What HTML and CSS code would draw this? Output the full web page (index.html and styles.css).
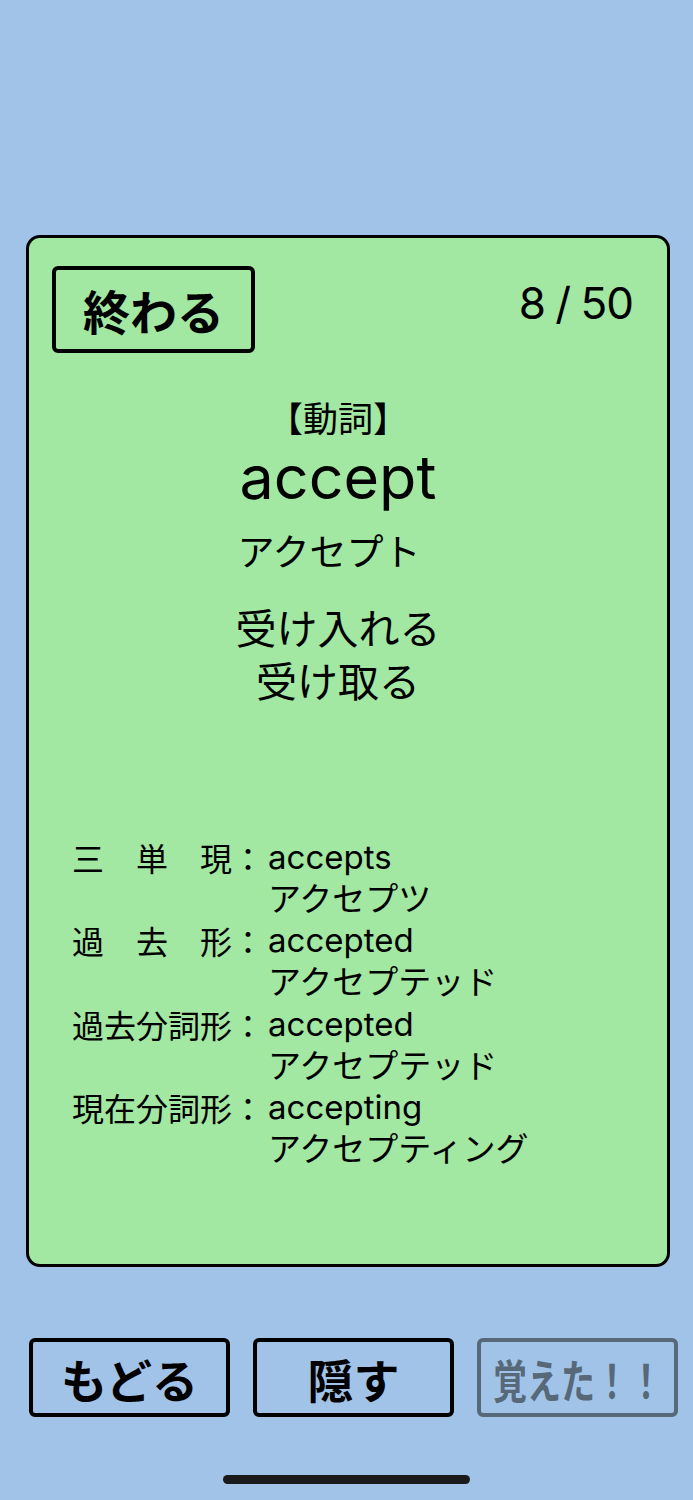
FILE: index.html
```
<!DOCTYPE html>
<html lang="ja">
<head>
<meta charset="utf-8">
<title>単語カード</title>
<link rel="stylesheet" href="styles.css">
</head>
<body>
<div class="screen">
  <section class="card">
    <div class="card-header">
      <button class="btn btn-finish">終わる</button>
      <div class="counter">8 / 50</div>
    </div>
    <div class="word-block">
      <div class="pos">【動詞】</div>
      <div class="word">accept</div>
      <div class="reading">アクセプト</div>
      <div class="meaning">
        <div>受け入れる</div>
        <div>受け取る</div>
      </div>
    </div>
    <div class="forms">
      <div class="form-label">三　単　現：</div>
      <div class="form-value"><span class="en">accepts</span><br>アクセプツ</div>
      <div class="form-label">過　去　形：</div>
      <div class="form-value"><span class="en">accepted</span><br>アクセプテッド</div>
      <div class="form-label">過去分詞形：</div>
      <div class="form-value"><span class="en">accepted</span><br>アクセプテッド</div>
      <div class="form-label">現在分詞形：</div>
      <div class="form-value"><span class="en">accepting</span><br>アクセプティング</div>
    </div>
  </section>
  <nav class="actions">
    <button class="btn btn-action">もどる</button>
    <button class="btn btn-action">隠す</button>
    <button class="btn btn-action btn-disabled"><span class="condensed">覚えた！！</span></button>
  </nav>
  <div class="home-indicator"></div>
</div>
</body>
</html>
```
FILE: styles.css
```
html, body {
  margin: 0;
  padding: 0;
}
body {
  background: #a0c3e7;
  font-family: "Inter", "Noto Sans CJK JP", sans-serif;
  color: #000;
}
.screen {
  width: 693px;
  height: 1500px;
  display: flex;
  flex-direction: column;
  box-sizing: border-box;
  padding-top: 235px;
}
.card {
  margin-left: 26px;
  width: 644px;
  height: 1032px;
  box-sizing: border-box;
  background: #a2e7a2;
  border: 3px solid #000;
  border-radius: 14px;
  display: flex;
  flex-direction: column;
}
.card-header {
  display: flex;
  justify-content: space-between;
  align-items: flex-start;
  padding: 28px 34px 0 23px;
}
.btn {
  font-family: "Noto Sans CJK JP", sans-serif;
  font-weight: 700;
  background: transparent;
  border: 4px solid #000;
  border-radius: 6px;
  color: #000;
  padding: 0;
  margin: 0;
  box-sizing: border-box;
  display: flex;
  align-items: center;
  justify-content: center;
}
.btn-finish {
  width: 203px;
  height: 87px;
  font-size: 47px;
  line-height: 1;
}
.counter {
  font-size: 44px;
  line-height: 1;
  margin-top: 15px;
  letter-spacing: -1px;
  word-spacing: -1px;
}
.word-block {
  display: flex;
  flex-direction: column;
  align-items: center;
  padding-right: 20px;
  margin-top: 42px;
}
.pos {
  font-family: "Noto Sans CJK JP", sans-serif;
  font-size: 35px;
  line-height: 44px;
}
.word {
  font-size: 61px;
  line-height: 76px;
}
.reading {
  font-family: "Noto Sans CJK JP", sans-serif;
  font-size: 37px;
  line-height: 46px;
  margin-top: 12px;
  margin-right: 18px;
}
.meaning {
  font-family: "Inter", "Noto Sans CJK JP", sans-serif;
  font-size: 41px;
  line-height: 53px;
  margin-top: 30px;
  text-align: center;
}
.forms {
  display: grid;
  grid-template-columns: auto 1fr;
  column-gap: 4px;
  padding-left: 43px;
  margin-top: 128px;
  font-size: 32px;
  line-height: 41.7px;
}
.form-label {
  font-family: "Noto Sans CJK JP", sans-serif;
  white-space: nowrap;
}
.form-value {
  font-size: 33px;
}
.actions {
  display: flex;
  gap: 23px;
  margin-top: 71px;
  padding-left: 29px;
}
.btn-action {
  width: 201px;
  height: 79px;
  font-size: 46px;
  line-height: 1;
}
.btn-disabled {
  border-color: #576879;
  color: #576879;
}
.condensed {
  display: inline-block;
  transform: scaleX(0.74);
  white-space: nowrap;
}
.home-indicator {
  width: 247px;
  height: 9px;
  border-radius: 5px;
  background: #1a1a1a;
  margin: 58px 0 0 223px;
}
```
